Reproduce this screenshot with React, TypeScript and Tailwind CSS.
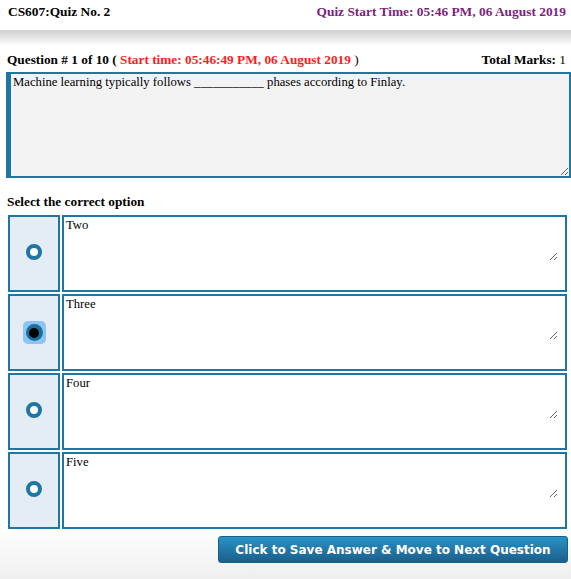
const options = ['Two', 'Three', 'Four', 'Five'];

const Radio = ({ checked }: { checked: boolean }) => {
  if (checked) {
    return (
      <div className='w-[23px] h-[23px] rounded-[5px] bg-[#8cc4f5] flex items-center justify-center'>
        <div className='w-[17px] h-[17px] rounded-full bg-[#1a6f98] flex items-center justify-center'>
          <div className='w-[10px] h-[10px] rounded-full bg-black' />
        </div>
      </div>
    );
  }
  return <div className='mb-[3px] w-[16px] h-[16px] rounded-full border-[4px] border-[#1d77a2] bg-white' />;
};

const App = () => {
  return (
    <div className='w-[571px] h-[579px] overflow-hidden text-black font-["Liberation_Serif",serif] text-[13.3px] bg-[linear-gradient(to_bottom,#ffffff_525px,#efefef_579px)]'>
      <header className='h-[30px] pt-[4px] px-[8px] flex justify-between font-bold leading-[16px] text-[13.4px]'>
        <span>CS607:Quiz No. 2</span>
        <span className='text-[#7d1f7c] mr-[-3px]'>Quiz Start Time: 05:46 PM, 06 August 2019</span>
      </header>
      <div className='h-[16px] bg-gradient-to-b from-[#cfcfcf] to-white' />

      <div className='mt-[4px] h-[20px] pl-[7px] pr-[5px] flex items-center justify-between'>
        <span className='font-bold'>
          Question # 1 of 10 ( <span className='text-[#ff1c1c]'>Start time: 05:46:49 PM, 06 August 2019</span> <span className='font-normal'>)</span>
        </span>
        <span><b>Total Marks:</b> 1</span>
      </div>

      <textarea
        readOnly
        defaultValue='Machine learning typically follows ___________ phases according to Finlay.'
        className='block mt-[2px] ml-[6px] w-[565px] h-[106px] bg-[#f3f3f3] border-[2px] border-l-[5px] border-[#1d77a2] px-[2px] py-0 leading-[16px] outline-none font-["Liberation_Serif",serif] text-[12.7px]'
      />

      <div className='mt-[16px] pl-[7px] font-bold leading-[16px]'>Select the correct option</div>

      <div className='mt-[5px] ml-[8px] flex flex-col gap-[2px]'>
        {options.map((opt, i) => (
          <div key={opt} className='flex gap-[2px] h-[77px]'>
            <div className='w-[52px] border-[2px] border-[#1d77a2] bg-[#e4ecf6] flex items-center justify-center'>
              <Radio checked={i === 1} />
            </div>
            <div className='w-[505px] border-[2px] border-[#1d77a2] bg-white'>
              <textarea
                readOnly
                defaultValue={opt}
                className='block w-[494px] h-[44px] border-0 bg-white px-[2px] py-0 leading-[16px] outline-none font-["Liberation_Serif",serif] text-[12.7px]'
              />
            </div>
          </div>
        ))}
      </div>

      <button className='mt-[7px] ml-[218px] w-[350px] h-[27px] rounded-[3px] border border-[#17608a] bg-gradient-to-b from-[#2a93c6] to-[#1a5f8c] text-white font-bold font-["DejaVu_Sans",sans-serif] text-[12px]'>
        Click to Save Answer &amp; Move to Next Question
      </button>
    </div>
  );
};

export default App;
